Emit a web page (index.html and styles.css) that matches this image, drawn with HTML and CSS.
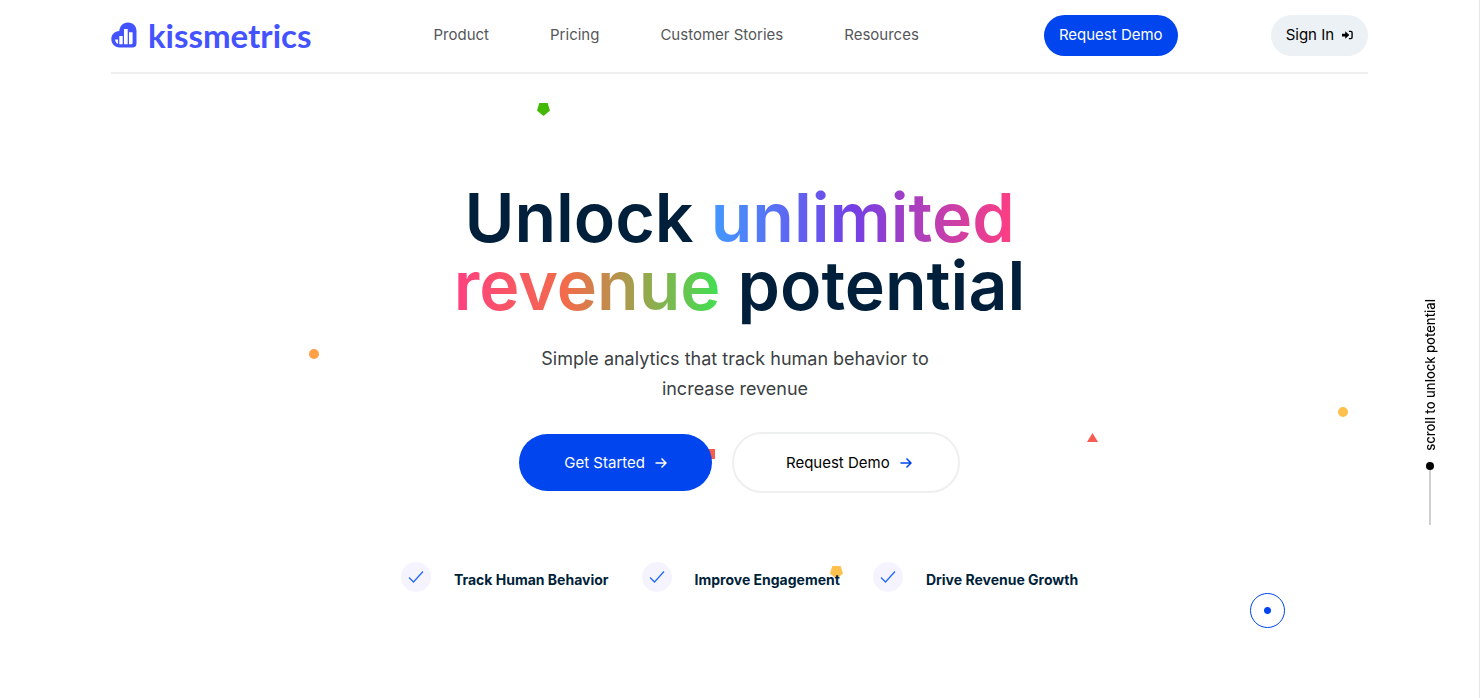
FILE: index.html
```html
<!DOCTYPE html>
<html lang="en">
<head>
<meta charset="utf-8">
<meta name="viewport" content="width=device-width, initial-scale=1">
<title>Kissmetrics</title>
<link rel="stylesheet" href="styles.css">
</head>
<body>
<div class="page">
  <header class="header">
    <a class="logo" href="#">
      <svg class="logo-mark" viewBox="0 0 26 26" aria-hidden="true">
        <path fill="#4353ff" d="M17 .5C11.700 .5 8.600 4.200 8.300 9C3.600 9 .3 12.700 .3 17C.3 21.800 3.800 25.500 8.500 25.500H21.500C24 25.500 25.500 24 25.500 21.500V9C25.500 4 21.900 .5 17 .5Z"/>
        <path fill="#fff" d="M4 17.500H7V21.800C5.300 21.200 4.300 19.600 4 17.500ZM8.300 14H11.700V22.300H8.300ZM13 7H16.700V22.300H13ZM18 10.200H21.600V20.700Q21.600 22.300 20 22.300H18Z"/>
      </svg>
      <span class="logo-text">kissmetrics</span>
    </a>
    <nav class="nav">
      <a href="#">Product</a>
      <a href="#">Pricing</a>
      <a href="#">Customer Stories</a>
      <a href="#">Resources</a>
    </nav>
    <div class="actions">
      <a class="pill pill-blue" href="#">Request Demo</a>
      <a class="pill pill-light" href="#">Sign In
        <svg class="signin-icon" viewBox="0 0 12 10" aria-hidden="true"><path fill="#000" d="M0 3.500H3.500V.8L8 5L3.500 9.200V6.500H0Z"/><path fill="none" stroke="#000" stroke-width="1.500" d="M7.500 1H9.500Q11 1 11 2.500V7.500Q11 9 9.500 9H7.500"/></svg>
      </a>
    </div>
  </header>

  <main class="hero">
    <h1 class="title">Unlock <span class="rainbow">unlimited<br>revenue</span> potential</h1>
    <p class="lead">Simple analytics that track human behavior to increase revenue</p>
    <div class="cta">
      <a class="button button-blue" href="#">Get Started
        <svg class="arrow" viewBox="0 0 12 12" aria-hidden="true"><path d="M.5 6H11M6.500 1.500L11 6L6.500 10.500"/></svg>
      </a>
      <a class="button button-outline" href="#">Request Demo
        <svg class="arrow" viewBox="0 0 12 12" aria-hidden="true"><path d="M.5 6H11M6.500 1.500L11 6L6.500 10.500"/></svg>
      </a>
    </div>
    <ul class="benefits">
      <li><svg class="check" viewBox="0 0 30 30" aria-hidden="true"><circle cx="15" cy="15" r="15"/><path d="M8 15.500L12.500 20L22 9.500"/></svg><span>Track Human Behavior</span></li>
      <li><svg class="check" viewBox="0 0 30 30" aria-hidden="true"><circle cx="15" cy="15" r="15"/><path d="M8 15.500L12.500 20L22 9.500"/></svg><span>Improve Engagement</span></li>
      <li><svg class="check" viewBox="0 0 30 30" aria-hidden="true"><circle cx="15" cy="15" r="15"/><path d="M8 15.500L12.500 20L22 9.500"/></svg><span>Drive Revenue Growth</span></li>
    </ul>
  </main>

  <div class="confetti" aria-hidden="true">
    <i class="shape pentagon green"></i>
    <i class="shape dot orange"></i>
    <i class="shape square red"></i>
    <i class="shape triangle"></i>
    <i class="shape dot yellow"></i>
    <i class="shape pentagon amber"></i>
  </div>
  <a class="scroll" href="#"><span class="scroll-text">scroll to unlock potential</span><span class="scroll-dot"></span><span class="scroll-line"></span></a>
  <div class="cursor" aria-hidden="true"></div>
</div>
</body>
</html>
```

FILE: styles.css
```css
* { box-sizing: border-box; }
body {
  margin: 0;
  background: #fff;
  color: #001f3a;
  font-family: Inter, "Liberation Sans", sans-serif;
}
a { color: inherit; text-decoration: none; }
.page {
  position: relative;
  isolation: isolate;
  min-height: 100vh;
  border-right: 1px solid #e6e6e6;
  overflow: hidden;
}
.header {
  display: flex;
  align-items: center;
  justify-content: space-between;
  width: 85%;
  margin: 0 auto;
  padding: 15px 0 16px;
  border-bottom: 2px solid #efefef;
}
.logo { display: flex; align-items: center; gap: 11px; padding-bottom: 2px; color: #4353ff; }
.logo-mark { width: 26px; height: 26px; }
.logo-text { font: 700 33px/38px Lato, sans-serif; }
.nav { display: flex; gap: 61px; padding: 0 3px 1px 0; font-size: 15px; line-height: 20px; color: #55575a; }
.actions { display: flex; gap: 93px; }
.pill {
  display: flex;
  align-items: center;
  gap: 8px;
  padding: 0 15px 1px;
  border-radius: 21px;
  font-size: 15px;
  line-height: 40px;
}
.pill-blue { background: #0045ed; color: #fff; }
.pill-light { background: #ecf1f5; color: #000; }
.signin-icon { width: 11px; height: 10px; }

.hero { display: flex; flex-direction: column; align-items: center; padding: 109px 24px 48px; }
.title { margin: 0; font-size: 68px; font-weight: 600; line-height: 68px; text-align: center; }
.rainbow {
  background: linear-gradient(90deg, #4299ff 0%, #743fe5 25%, #ff3e82 53%, #f26c4a 73%, #3fe052 100%);
  -webkit-background-clip: text;
  background-clip: text;
  color: transparent;
}
.lead {
  max-width: 440px;
  margin: 25px 0 28px;
  padding-right: 9px;
  font-size: 18px;
  line-height: 30px;
  text-align: center;
  color: #3c3f43;
}
.cta { display: flex; align-items: center; gap: 20px; }
.button {
  display: flex;
  align-items: center;
  justify-content: center;
  gap: 10px;
  font-size: 15px;
  line-height: 20px;
  border-radius: 30px;
}
.button-blue { padding: 19px 45px 18px; background: #0045ed; color: #fff; }
.button-outline { padding: 19px 46px 18px 52px; border: 2px solid #eeefef; background: #fff; color: #000; }
.arrow { width: 12px; height: 12px; fill: none; stroke: currentColor; stroke-width: 1.5; }
.button-outline .arrow { stroke: #0045ed; }
.benefits {
  display: flex;
  gap: 33px;
  margin: 69px 0 0;
  padding: 0;
  list-style: none;
  font-size: 14px;
  font-weight: 700;
  line-height: 30px;
}
.benefits li { display: flex; align-items: flex-start; gap: 23px; }
.benefits span { padding-top: 3px; }
.check { width: 30px; height: 30px; }
.check circle { fill: #f5f4fe; }
.check path { fill: none; stroke: #246bfd; stroke-width: 1.3; }

.confetti { position: absolute; inset: 0; z-index: -1; }
.shape { position: absolute; }
.pentagon { width: 13px; height: 13px; clip-path: polygon(18% 0, 82% 0, 100% 58%, 50% 100%, 0 58%); }
.dot { width: 10px; height: 10px; border-radius: 50%; }
.green { left: 537px; top: 103px; background: #43b906; }
.orange { left: 309px; top: 349px; background: #ffa047; }
.square { left: 705px; top: 449px; width: 10px; height: 10px; background: #f85c50; }
.triangle { left: 1087px; top: 433px; width: 11px; height: 9px; background: #f85c50; clip-path: polygon(50% 0, 100% 100%, 0 100%); }
.yellow { left: 1338px; top: 407px; background: #ffc04d; }
.amber { left: 830px; top: 566px; background: #ffc04d; }

.scroll {
  position: absolute;
  right: 40px;
  top: 299px;
  display: flex;
  flex-direction: column;
  align-items: center;
  width: 18px;
  color: #000;
}
.scroll-text { writing-mode: vertical-rl; transform: rotate(180deg); font-size: 13px; font-weight: 500; line-height: 18px; }
.scroll-dot { width: 8px; height: 8px; margin-top: 11px; border-radius: 50%; background: #000; }
.scroll-line { width: 2px; height: 55px; background: #cfcfcf; }
.cursor {
  position: absolute;
  left: 1250px;
  top: 593px;
  width: 35px;
  height: 35px;
  border: 1px solid #0045ed;
  border-radius: 50%;
  background: radial-gradient(circle, #0045ed 3px, transparent 4px);
}
```
